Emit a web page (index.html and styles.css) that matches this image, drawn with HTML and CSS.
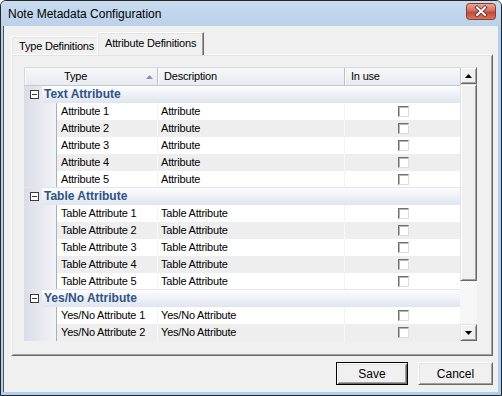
FILE: index.html
```html
<!DOCTYPE html>
<html lang="en">
<head>
  <meta charset="utf-8">
  <title>Note Metadata Configuration</title>
  <link rel="stylesheet" href="styles.css">
</head>
<body>
  <div class="window">
    <div class="titlebar">
      <span class="title">Note Metadata Configuration</span>
      <span class="close">
        <svg width="30" height="18" viewBox="0 0 30 18">
          <defs>
            <linearGradient id="cg" x1="0" y1="0" x2="0" y2="1">
              <stop offset="0" stop-color="#e9ab9e"/>
              <stop offset="0.45" stop-color="#d16f5e"/>
              <stop offset="0.55" stop-color="#c24a39"/>
              <stop offset="1" stop-color="#d57a62"/>
            </linearGradient>
          </defs>
          <rect x="0.5" y="0.5" width="29" height="16" rx="3" fill="url(#cg)" stroke="#8c3a30"/>
          <path d="M11 4.5 L19 12 M19 4.5 L11 12" stroke="#5a2a24" stroke-width="3.6" stroke-linecap="square"/>
          <path d="M11 4.5 L19 12 M19 4.5 L11 12" stroke="#ffffff" stroke-width="2" stroke-linecap="square"/>
        </svg>
      </span>
    </div>
    <div class="client">
      <div class="tabs">
        <div class="tab">Type Definitions</div>
        <div class="tab active">Attribute Definitions</div>
      </div>
      <div class="panel">
        <div class="grid">
          <div class="table">
            <div class="head">
              <div class="hcell first">Type
                <svg class="sort" width="7" height="4" viewBox="0 0 7 4"><polygon points="0,4 7,4 3.5,0" fill="#8193ae"/></svg>
              </div>
              <div class="hcell">Description</div>
              <div class="hcell">In use</div>
            </div>

            <div class="group"><div class="gut"><span class="minus"></span></div><div class="gname">Text Attribute</div></div>
            <div class="row"><div class="gutter"></div><div class="cell">Attribute 1</div><div class="cell sep">Attribute</div><div class="cell sep check"><span class="box"></span></div></div>
            <div class="row alt"><div class="gutter"></div><div class="cell">Attribute 2</div><div class="cell sep">Attribute</div><div class="cell sep check"><span class="box"></span></div></div>
            <div class="row"><div class="gutter"></div><div class="cell">Attribute 3</div><div class="cell sep">Attribute</div><div class="cell sep check"><span class="box"></span></div></div>
            <div class="row alt"><div class="gutter"></div><div class="cell">Attribute 4</div><div class="cell sep">Attribute</div><div class="cell sep check"><span class="box"></span></div></div>
            <div class="row last"><div class="gutter"></div><div class="cell">Attribute 5</div><div class="cell sep">Attribute</div><div class="cell sep check"><span class="box"></span></div></div>

            <div class="group"><div class="gut"><span class="minus"></span></div><div class="gname">Table Attribute</div></div>
            <div class="row"><div class="gutter"></div><div class="cell">Table Attribute 1</div><div class="cell sep">Table Attribute</div><div class="cell sep check"><span class="box"></span></div></div>
            <div class="row alt"><div class="gutter"></div><div class="cell">Table Attribute 2</div><div class="cell sep">Table Attribute</div><div class="cell sep check"><span class="box"></span></div></div>
            <div class="row"><div class="gutter"></div><div class="cell">Table Attribute 3</div><div class="cell sep">Table Attribute</div><div class="cell sep check"><span class="box"></span></div></div>
            <div class="row alt"><div class="gutter"></div><div class="cell">Table Attribute 4</div><div class="cell sep">Table Attribute</div><div class="cell sep check"><span class="box"></span></div></div>
            <div class="row last"><div class="gutter"></div><div class="cell">Table Attribute 5</div><div class="cell sep">Table Attribute</div><div class="cell sep check"><span class="box"></span></div></div>

            <div class="group"><div class="gut"><span class="minus"></span></div><div class="gname">Yes/No Attribute</div></div>
            <div class="row"><div class="gutter"></div><div class="cell">Yes/No Attribute 1</div><div class="cell sep">Yes/No Attribute</div><div class="cell sep check"><span class="box"></span></div></div>
            <div class="row alt"><div class="gutter"></div><div class="cell">Yes/No Attribute 2</div><div class="cell sep">Yes/No Attribute</div><div class="cell sep check"><span class="box"></span></div></div>
          </div>
          <div class="scrollbar">
            <div class="sbtn"><svg width="7" height="4" viewBox="0 0 7 4"><polygon points="0,4 7,4 3.5,0" fill="#000"/></svg></div>
            <div class="thumb"></div>
            <div class="track"></div>
            <div class="sbtn"><svg width="7" height="4" viewBox="0 0 7 4"><polygon points="0,0 7,0 3.5,4" fill="#000"/></svg></div>
          </div>
        </div>
      </div>
      <div class="buttons">
        <div class="btn default">Save</div>
        <div class="btn">Cancel</div>
      </div>
    </div>
  </div>
</body>
</html>
```

FILE: styles.css
```css
* {
  box-sizing: border-box;
}
html, body {
  margin: 0;
  padding: 0;
  background: #ffffff;
}
body {
  font-family: "Liberation Sans", Arial, sans-serif;
  font-size: 11px;
  letter-spacing: -0.2px;
  color: #000;
}
.window {
  width: 502px;
  height: 396px;
  border: 1px solid #262626;
  border-radius: 6px 6px 0 0;
  background: #aed0ee;
  padding: 0 3px 3px 2px;
  display: flex;
  flex-direction: column;
}
.titlebar {
  height: 25px;
  display: flex;
  align-items: center;
  justify-content: space-between;
  background: linear-gradient(#c8dbef, #bad1ea);
  margin: 0 -3px 0 -2px;
  padding: 0 5px 0 7px;
  border-radius: 5px 5px 0 0;
}
.title {
  font-size: 12px;
  letter-spacing: 0;
  color: #000;
  padding-top: 1px;
}
.close {
  display: flex;
  margin-top: -3px;
}
.client {
  flex: 1;
  background: #f0f0f0;
  border-left: 1px solid #4a5866;
  padding: 6px 5px 0 7px;
  display: flex;
  flex-direction: column;
}
.tabs {
  display: flex;
  align-items: flex-end;
  height: 22px;
}
.tab {
  height: 18px;
  width: 86px;
  padding: 3px 0 0 7px;
  border-top: 1px solid #fff;
  border-left: 1px solid #fff;
  box-shadow: inset 1px 1px #e3e3e3;
  white-space: nowrap;
}
.tab.active {
  height: 23px;
  width: 107px;
  padding: 4px 0 0 7px;
  border-right: 1px solid #696969;
  box-shadow: inset -1px 0 #a0a0a0, inset 1px 1px #e3e3e3;
  background: #f0f0f0;
  margin-bottom: -1px;
  position: relative;
  z-index: 1;
}
.panel {
  height: 302px;
  border-top: 1px solid #fff;
  border-left: 1px solid #fff;
  border-right: 1px solid #696969;
  border-bottom: 1px solid #696969;
  box-shadow: inset 1px 1px #e3e3e3, inset -1px -1px #a0a0a0;
  padding: 12px 11px 0 12px;
}
.grid {
  display: flex;
  height: 274px;
}
.table {
  width: 436px;
  display: flex;
  flex-direction: column;
}
.head {
  display: grid;
  grid-template-columns: 133px 187px 116px;
  height: 19px;
  border-top: 1px solid #d3d7de;
  border-bottom: 1px solid #c4c9d1;
  border-left: 1px solid #d3d7de;
  background: linear-gradient(#f6f7f9, #e8ebef);
}
.hcell {
  border-right: 1px solid #bcc1ca;
  box-shadow: inset 1px 0 #fff;
  padding: 2px 0 0 6px;
  position: relative;
}
.hcell.first {
  padding-left: 39px;
}
.sort {
  position: absolute;
  left: 121px;
  top: 7px;
}
.row {
  display: grid;
  grid-template-columns: 33px 100px 187px 116px;
  height: 17px;
  background: #ffffff;
}
.row.alt {
  background: #eeeeee;
}
.row.last {
  border-bottom: 1px solid #e6e6e6;
}
.gutter {
  background: linear-gradient(to right, #d9dde7, #f2f3f7);
  border-right: 1px solid #a7b0c2;
}
.cell {
  padding: 2px 0 0 4px;
  white-space: nowrap;
}
.cell.sep {
  border-left: 1px solid #f3f3f3;
  padding-left: 3px;
}
.row.alt .cell.sep {
  border-left-color: #f8f8f8;
}
.check {
  display: flex;
  justify-content: center;
  align-items: center;
  padding: 0 1px 0 0;
}
.box {
  width: 11px;
  height: 11px;
  background: #fff;
  border-top: 1px solid #707070;
  border-left: 1px solid #707070;
  border-right: 1px solid #dcdcdc;
  border-bottom: 1px solid #dcdcdc;
  box-shadow: inset 1px 1px #b5b5b5;
}
.group {
  display: grid;
  grid-template-columns: 18px 1fr;
  height: 17px;
}
.gut {
  background: linear-gradient(to right, #d9dde7, #e6e9ef);
  padding: 4px 0 0 6px;
}
.minus {
  display: block;
  width: 9px;
  height: 9px;
  border: 1px solid #3a3a3a;
  background: linear-gradient(#3a3a3a, #3a3a3a) center / 5px 1px no-repeat, #fff;
}
.gname {
  background: linear-gradient(#fdfdfe, #dfe5ef);
  font-weight: bold;
  font-size: 12px;
  letter-spacing: 0;
  color: #2f5386;
  padding: 1px 0 0 2px;
}
.scrollbar {
  width: 17px;
  display: flex;
  flex-direction: column;
  margin-left: 0;
}
.sbtn, .thumb {
  background: #f0f0f0;
  border-top: 1px solid #e3e3e3;
  border-left: 1px solid #e3e3e3;
  border-right: 1px solid #696969;
  border-bottom: 1px solid #696969;
  box-shadow: inset 1px 1px #fff, inset -1px -1px #a0a0a0;
}
.sbtn {
  height: 17px;
  display: flex;
  align-items: center;
  justify-content: center;
}
.thumb {
  height: 197px;
}
.track {
  flex: 1;
  background: repeating-conic-gradient(#f0f0f0 0 25%, #ffffff 0 50%) 0 0 / 2px 2px;
}
.buttons {
  display: flex;
  justify-content: flex-end;
  gap: 10px;
  margin-top: 6px;
}
.btn {
  height: 23px;
  width: 75px;
  display: flex;
  align-items: center;
  justify-content: center;
  background: #f0f0f0;
  border-top: 1px solid #fff;
  border-left: 1px solid #fff;
  border-right: 1px solid #696969;
  border-bottom: 1px solid #696969;
  box-shadow: inset 1px 1px #e3e3e3, inset -1px -1px #a0a0a0;
  font-size: 12px;
  letter-spacing: 0;
}
.btn.default {
  width: 72px;
  border: 1px solid #000;
  box-shadow: inset 1px 1px #fff, inset -1px -1px #696969, inset 2px 2px #e3e3e3, inset -2px -2px #a0a0a0;
}
```
